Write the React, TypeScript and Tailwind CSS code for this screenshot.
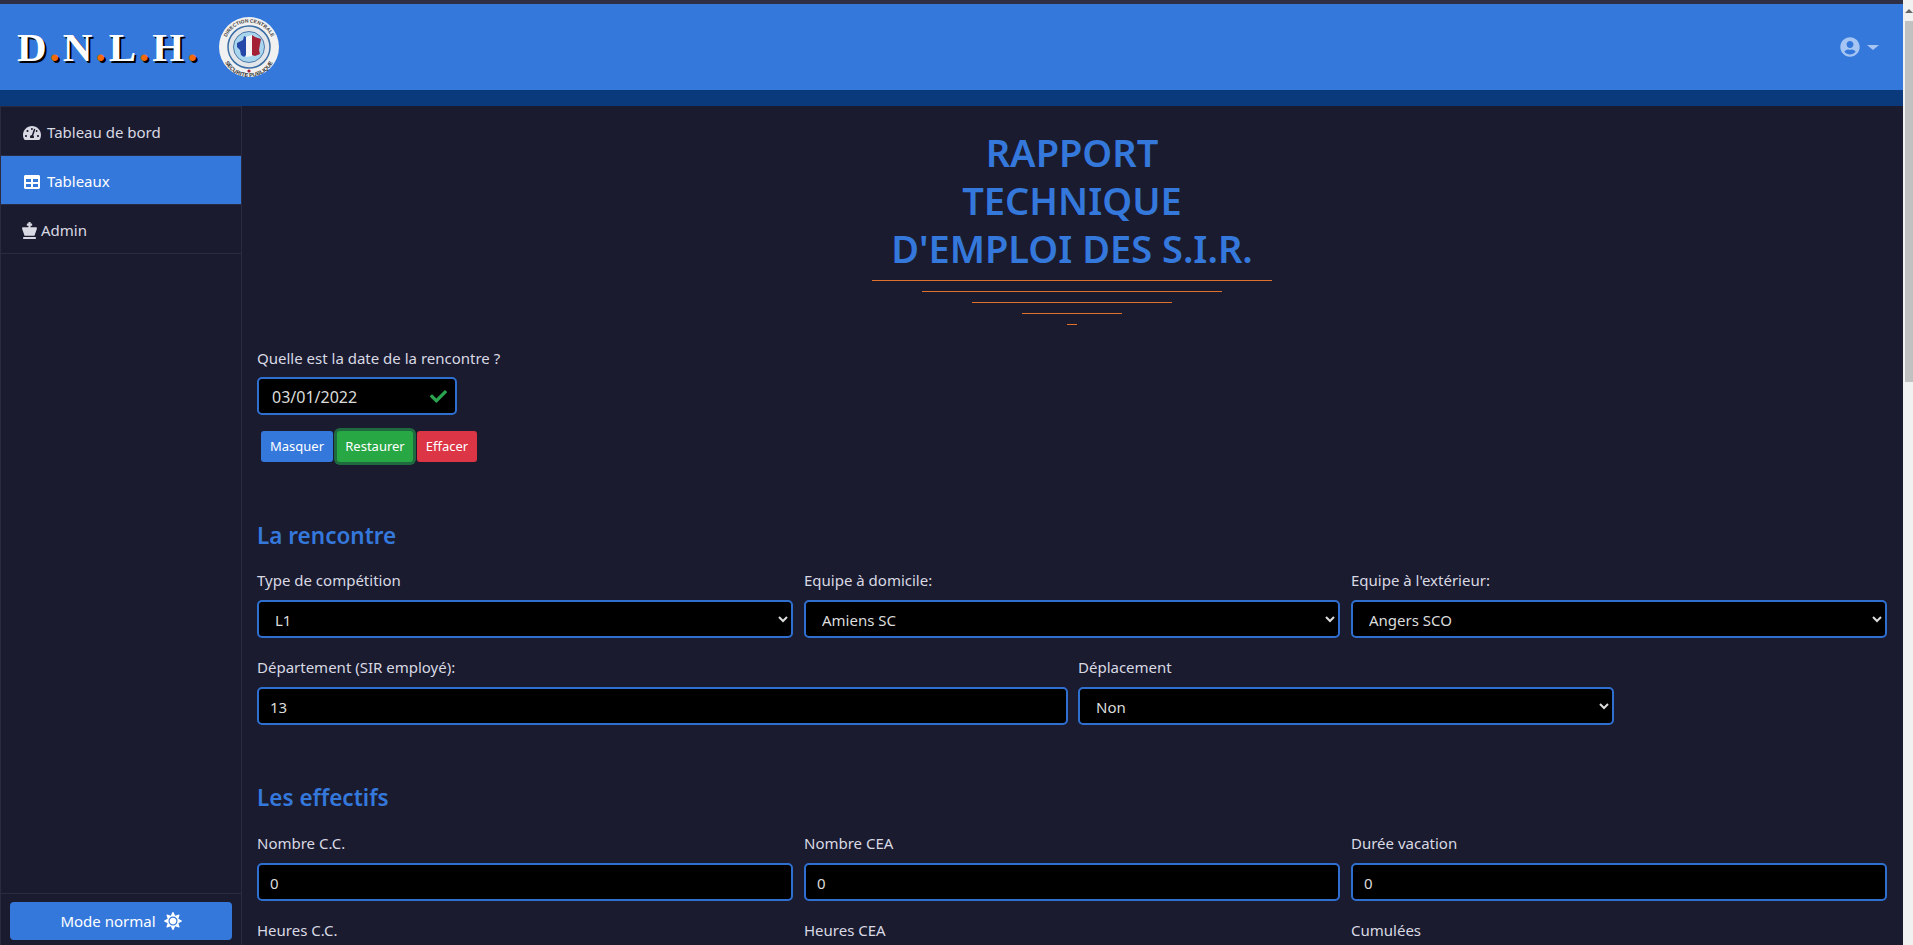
import { FaCheck, FaChessKing, FaSun, FaTable, FaTachometerAlt, FaUserCircle } from "react-icons/fa";

const fontUi = "font-['Noto_Sans','Open_Sans',sans-serif]";

const fieldClass =
  "w-full h-[38px] pt-[2px] bg-black border-2 border-[#2f6fd0] rounded-[5px] text-[15px] text-[#dcdcdc] outline-none [color-scheme:dark] " +
  fontUi;

function Logo() {
  return (
    <svg viewBox="0 0 60 60" className="w-[60px] h-[60px] ml-[19px]">
      <circle cx="30" cy="30" r="30" fill="#f1f1f1" />
      <circle cx="30" cy="30" r="21" fill="#e2e6ea" stroke="#3b6ea5" strokeWidth="1.5" />
      <circle cx="30" cy="30" r="15.5" fill="#a9d6ee" stroke="#335f92" strokeWidth="0.8" />
      <defs>
        <path id="arcTop" d="M5.5 30a24.5 24.5 0 0 1 49 0" />
        <path id="arcBottom" d="M3 33a27 27 0 0 0 54 0" />
      </defs>
      <text fontSize="5" fontWeight="700" fill="#444" fontFamily="Liberation Sans, sans-serif">
        <textPath href="#arcTop" startOffset="50%" textAnchor="middle">DIRECTION CENTRALE</textPath>
      </text>
      <text fontSize="5.6" fontWeight="700" fill="#333" fontFamily="Liberation Sans, sans-serif">
        <textPath href="#arcBottom" startOffset="50%" textAnchor="middle">SECURITE PUBLIQUE</textPath>
      </text>
      <path d="M18 26l6-3 1-4 2 1v18l-2 2-3-2-1-5-3-3z" fill="#2447a8" />
      <path d="M27 20l6-2v21l-6 1z" fill="#f5f5f5" />
      <path d="M33 18l3 2 6 2-1 5-1 6 1 4-5 2-3-1z" fill="#a32035" />
      <circle cx="30" cy="54" r="1.6" fill="#a32035" />
    </svg>
  );
}

function Brand() {
  const letters = ["D", "N", "L", "H"];
  return (
    <div className="flex font-['Liberation_Serif',serif] font-bold text-[41px] leading-none text-white [text-shadow:2px_2px_0_#000] tracking-[3px]">
      {letters.map((l) => (
        <span key={l}>
          {l}
          <span className="text-[#f26a0c]">.</span>
        </span>
      ))}
    </div>
  );
}

function NavItem({ icon, label, active }: { icon: React.ReactNode; label: string; active?: boolean }) {
  return (
    <div
      className={
        "h-[49px] pt-[3px] flex items-center border-b border-[#2a2b40] text-[15px] " +
        (active ? "bg-[#3578dc] text-white" : "text-[#d9d9e3]")
      }
    >
      {icon}
      {label}
    </div>
  );
}

function Field({ label, value, className }: { label: string; value: string; className?: string }) {
  return (
    <div className={className}>
      <label className="block h-6 leading-6 mb-2 text-[15px] text-[#d9d9e3]">{label}</label>
      <input type="text" defaultValue={value} className={fieldClass + " px-[11px]"} />
    </div>
  );
}

function SelectField({ label, value, className }: { label: string; value: string; className?: string }) {
  return (
    <div className={className}>
      <label className="block h-6 leading-6 mb-2 text-[15px] text-[#d9d9e3]">{label}</label>
      <select defaultValue={value} className={fieldClass + " px-[12px]"}>
        <option>{value}</option>
      </select>
    </div>
  );
}

function SectionTitle({ children, className }: { children: React.ReactNode; className?: string }) {
  return <h2 className={"text-[22.5px] leading-[30px] font-semibold text-[#3578dc] " + className}>{children}</h2>;
}

export default function App() {
  return (
    <div className={"h-[945px] overflow-hidden flex bg-[#1a1b2f] " + fontUi}>
      <div className="flex-1 min-w-0 flex flex-col">
        <div className="h-1 bg-[#2f3046]" />
        <header className="h-[86px] shrink-0 bg-[#3578dc] flex items-center pl-[17px] pr-[24px]">
          <Brand />
          <Logo />
          <div className="ml-auto flex items-center gap-[7px] text-[#a6c5f2]">
            <FaUserCircle className="text-[20px]" />
            <span className="w-0 h-0 border-x-[6px] border-x-transparent border-t-[5px] border-t-[#a6c5f2]" />
          </div>
        </header>
        <div className="h-4 shrink-0 bg-[#0a3a7c]" />

        <div className="flex-1 min-h-0 flex">
          <aside className="w-[242px] shrink-0 flex flex-col border-x border-[#2a2b40]">
            <div className="h-px bg-[#2a2b40]" />
            <NavItem icon={<FaTachometerAlt className="ml-[22px] mr-[6px] text-[18px]" />} label="Tableau de bord" />
            <NavItem active icon={<FaTable className="ml-[23px] mr-[7px] text-[16px]" />} label="Tableaux" />
            <NavItem icon={<FaChessKing className="ml-[20px] mr-[3px] text-[17px]" />} label="Admin" />
            <div className="mt-auto border-t border-[#2a2b40] h-[52px] px-[9px] pt-2">
              <button className="w-full h-[38px] rounded bg-[#3578dc] text-[15px] text-white flex items-center justify-center gap-2">
                Mode normal
                <FaSun className="text-[18px]" />
              </button>
            </div>
          </aside>

          <main className="flex-1 min-w-0 pl-[15px] pr-4 pt-[22px] overflow-hidden text-[#d9d9e3]">
            <h1 className="text-center text-[38px] leading-[48px] font-semibold text-[#3578dc]">
              RAPPORT
              <br />
              TECHNIQUE
              <br />
              D'EMPLOI DES S.I.R.
            </h1>
            <div className="mt-2 flex flex-col items-center gap-[10px]">
              <div className="h-px w-[400px] bg-[#e0702a]" />
              <div className="h-px w-[300px] bg-[#e0702a]" />
              <div className="h-px w-[200px] bg-[#e0702a]" />
              <div className="h-px w-[100px] bg-[#e0702a]" />
              <div className="h-px w-[10px] bg-[#e0702a]" />
            </div>

            <label className="block mt-[21px] h-6 leading-6 text-[15px]">Quelle est la date de la rencontre ?</label>
            <div className="relative w-[200px] mt-[7px]">
              <input type="text" defaultValue="03/01/2022" className={fieldClass + " pl-[13px] pr-[12px] text-[16px]"} />
              <FaCheck className="absolute right-[10px] top-[11px] text-[17px] text-[#2aa44f]" />
            </div>

            <div className="mt-4 ml-1 flex items-center gap-1 text-[13px] text-white">
              <button className="h-[31px] w-[72px] pt-px rounded-[3px] bg-[#3578dc]">Masquer</button>
              <button className="h-[31px] w-[76px] pt-px rounded-[3px] bg-[#28a745] ring-[3px] ring-[#1f6b3f]">Restaurer</button>
              <button className="h-[31px] w-[60px] pt-px rounded-[3px] bg-[#dc3545]">Effacer</button>
            </div>

            <SectionTitle className="mt-[59px]">La rencontre</SectionTitle>
            <div className="mt-[17px] grid grid-cols-3 gap-x-[11px]">
              <SelectField label="Type de compétition" value="L1" />
              <SelectField label="Equipe à domicile:" value="Amiens SC" />
              <SelectField label="Equipe à l'extérieur:" value="Angers SCO" />
            </div>
            <div className="mt-[17px] flex gap-[10px]">
              <Field label="Département (SIR employé):" value="13" className="w-[811px]" />
              <SelectField label="Déplacement" value="Non" className="w-[536px]" />
            </div>

            <SectionTitle className="mt-[58px]">Les effectifs</SectionTitle>
            <div className="mt-[18px] grid grid-cols-3 gap-x-[11px] gap-y-[17px]">
              <Field label="Nombre C.C." value="0" />
              <Field label="Nombre CEA" value="0" />
              <Field label="Durée vacation" value="0" />
              <Field label="Heures C.C." value="0" />
              <Field label="Heures CEA" value="0" />
              <Field label="Cumulées" value="0" />
            </div>
          </main>
        </div>
      </div>

      <div className="w-[10px] shrink-0 bg-[#f1f1f1] pl-[2px] flex flex-col">
        <div className="h-[21px] shrink-0 flex items-center justify-center">
          <span className="w-0 h-0 border-x-[4px] border-x-transparent border-b-[4px] border-b-[#666]" />
        </div>
        <div className="h-[361px] bg-[#c1c1c1]" />
      </div>
    </div>
  );
}
